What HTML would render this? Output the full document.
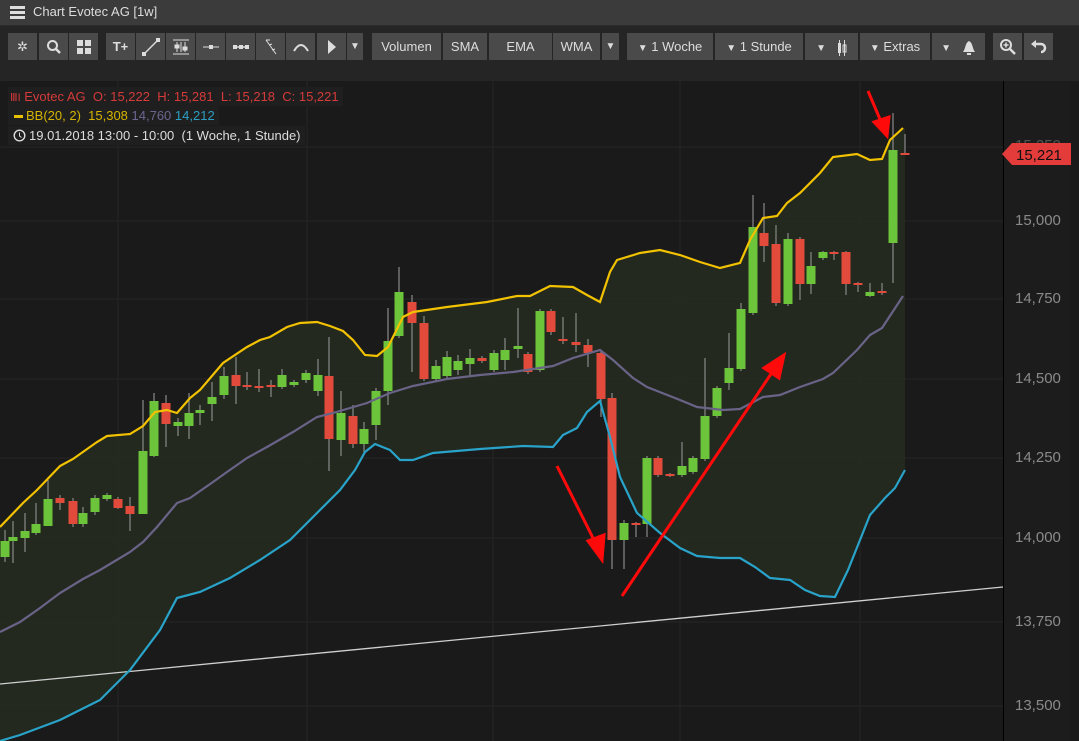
<!DOCTYPE html>
<html><head><meta charset="utf-8"><style>
*{margin:0;padding:0;box-sizing:border-box}
body{width:1079px;height:741px;background:#1a1a1a;font-family:"Liberation Sans",sans-serif;overflow:hidden;position:relative}
.title{position:absolute;left:0;top:0;width:1079px;height:26px;background:#3b3b3b;border-bottom:1px solid #2a2a2a;color:#ddd;font-size:13px;line-height:24px;padding-left:33px}
.hb{position:absolute;left:10px;top:6px;width:15px;height:3px;background:#ddd;box-shadow:0 5px 0 #ddd,0 10px 0 #ddd}
.tb{position:absolute;left:0;top:26px;width:1079px;height:55px;background:#252525}
.b{position:absolute;top:33px;height:27px;background:#4a4a4a;color:#ddd;font-size:13px;line-height:27px;text-align:center}
.leg{position:absolute;left:8px;font-size:13px;height:19px;line-height:19px;background:#1f1f1f;padding:0 4px 0 2px}
.ax{position:absolute;left:1003px;top:81px;width:67px;height:660px;background:#1c1c1c;border-left:1px solid #000}
.al{position:absolute;left:1015px;color:#8a8a8a;font-size:15px}
</style></head><body>
<div class="title"><div class="hb"></div>Chart Evotec AG [1w]</div>
<div class="tb"></div>
<div class="b" style="left:8px;width:29px">✲</div>
<div class="b" style="left:39px;width:29px"><svg width="16" height="16" viewBox="0 0 16 16" style="margin-top:6px"><circle cx="6.5" cy="6.5" r="4.5" stroke="#ddd" stroke-width="2" fill="none"/><path d="M10 10l4 4" stroke="#ddd" stroke-width="2.5"/></svg></div>
<div class="b" style="left:69px;width:29px"><svg width="14" height="14" style="margin-top:7px"><rect x="0" y="0" width="6" height="6" fill="#ddd"/><rect x="8" y="0" width="6" height="6" fill="#ddd"/><rect x="0" y="8" width="6" height="6" fill="#ddd"/><rect x="8" y="8" width="6" height="6" fill="#ddd"/></svg></div>
<div class="b" style="left:106px;width:29px;font-weight:bold">T+</div>
<div class="b" style="left:136px;width:29px"><svg width="20" height="20" style="margin-top:4px"><path d="M3 17L17 3" stroke="#ddd" stroke-width="1.5"/><rect x="1" y="15" width="4" height="4" fill="#ddd"/><rect x="15" y="1" width="4" height="4" fill="#ddd"/></svg></div>
<div class="b" style="left:166px;width:29px"><svg width="20" height="20" style="margin-top:4px" stroke="#ddd" fill="none"><path d="M2 3h16M2 17h16M6 5v10M10 5v10M14 5v10"/><rect x="4" y="8" width="4" height="3" fill="#ddd"/><rect x="12" y="10" width="4" height="3" fill="#ddd"/></svg></div>
<div class="b" style="left:196px;width:29px"><svg width="20" height="20" style="margin-top:4px"><path d="M2 10h16" stroke="#ddd"/><rect x="8" y="8" width="4" height="4" fill="#ddd"/></svg></div>
<div class="b" style="left:226px;width:29px"><svg width="20" height="20" style="margin-top:4px"><path d="M2 10h16" stroke="#ddd" stroke-width="1.5"/><rect x="2" y="8" width="4" height="4" fill="#ddd"/><rect x="8" y="8" width="4" height="4" fill="#ddd"/><rect x="14" y="8" width="4" height="4" fill="#ddd"/></svg></div>
<div class="b" style="left:256px;width:29px"><svg width="20" height="20" style="margin-top:4px" stroke="#ddd" fill="none"><path d="M5 3l10 14M5 3l4 0M8 8l3 -1M11 13l3 -1"/></svg></div>
<div class="b" style="left:286px;width:29px"><svg width="20" height="20" style="margin-top:4px"><path d="M3 14Q10 2 17 14" stroke="#ddd" stroke-width="2" fill="none"/></svg></div>
<div class="b" style="left:317px;width:29px"><svg width="20" height="20" style="margin-top:4px"><path d="M6 3l8 7-8 7z" fill="#ddd"/></svg></div>
<div class="b" style="left:347px;width:16px;font-size:10px">▼</div>
<div class="b" style="left:372px;width:69px">Volumen</div>
<div class="b" style="left:443px;width:44px">SMA</div>
<div class="b" style="left:489px;width:63px">EMA</div>
<div class="b" style="left:553px;width:47px">WMA</div>
<div class="b" style="left:602px;width:17px;font-size:10px">▼</div>
<div class="b" style="left:627px;width:86px"><span style="font-size:10px">▼</span> 1 Woche</div>
<div class="b" style="left:715px;width:88px"><span style="font-size:10px">▼</span> 1 Stunde</div>
<div class="b" style="left:805px;width:53px"><span style="font-size:10px">▼</span>&nbsp;&nbsp;&nbsp;<svg width="10" height="18" style="vertical-align:middle"><rect x="1" y="4" width="3" height="10" fill="#ddd"/><path d="M2.5 1v16M7.5 1v16" stroke="#ddd"/><rect x="6" y="6" width="3" height="7" fill="none" stroke="#ddd"/></svg></div>
<div class="b" style="left:860px;width:70px"><span style="font-size:10px">▼</span> Extras</div>
<div class="b" style="left:932px;width:53px"><span style="font-size:10px">▼</span>&nbsp;&nbsp;&nbsp;<svg width="14" height="16" style="vertical-align:middle"><path d="M7 1C3 3 4 8 1 12h12C10 8 11 3 7 1z" fill="#ddd"/><rect x="5" y="13" width="4" height="2" fill="#ddd"/></svg></div>
<div class="b" style="left:993px;width:29px"><svg width="18" height="18" style="margin-top:5px"><circle cx="7" cy="7" r="5" stroke="#ddd" stroke-width="2" fill="none"/><path d="M11 11l5 5" stroke="#ddd" stroke-width="2.5"/><path d="M4.5 7h5M7 4.5v5" stroke="#ddd" stroke-width="1.5"/></svg></div>
<div class="b" style="left:1024px;width:29px"><svg width="18" height="18" style="margin-top:5px"><path d="M5 6h6a4 4 0 0 1 0 8" stroke="#ddd" stroke-width="2.5" fill="none"/><path d="M1 6l5-4v8z" fill="#ddd"/></svg></div>

<div class="ax"></div>
<svg width="1003" height="660" style="position:absolute;left:0;top:81px" viewBox="0 81 1003 660">
<g stroke="#252525" stroke-width="1">
<path d="M118 81V741M307 81V741M493 81V741M680 81V741M860 81V741"/>
<path d="M0 147H1003M0 221H1003M0 299H1003M0 379H1003M0 458H1003M0 538H1003M0 622H1003M0 706H1003"/>
</g>
<path fill="#242a20" opacity="0.95" d="M0 527L23 503L37 490L60 466L73 459L97 442L107 436L130 434L143 426L155 412L167 410L177 413L190 398L200 390L223 363L247 347L260 340L270 337L287 327L300 323L317 322L330 326L343 331L353 340L365 355L377 356L388 347L403 317L413 312L447 307L487 302L517 296L530 296L550 286L573 287L587 295L600 302L610 272L617 260L640 253L660 250L680 255L700 262L720 268L740 263L750 240L763 218L777 216L787 203L800 193L820 173L833 157L857 154L870 160L882 159L890 140L903 128L905 128L905 470L895 488L885 498L870 515L860 540L848 570L835 597L820 596L805 590L790 580L770 578L755 567L740 558L720 558L697 556L680 548L660 533L637 513L620 477L610 437L600 401L587 412L577 428L563 435L553 447L523 446L480 449L433 453L413 460L400 460L390 450L375 444L365 452L355 470L340 490L320 510L290 540L260 560L230 578L200 592L177 598L160 630L130 670L100 700L60 720L20 735L0 741Z"/>
<path d="M0 684L1003 587" stroke="#d0d0d0" stroke-width="1.3"/>
<g id="c"></g>
<path fill="none" stroke="#6a6388" stroke-width="2.2" d="M0 632L20 622L40 608L60 593L83 579L100 570L130 552L143 542L157 527L177 503L190 498L213 482L227 472L247 458L267 447L293 432L317 417L333 413L367 403L390 393L413 386L447 379L480 375L513 372L553 366L573 358L600 350L613 360L633 378L647 387L680 400L697 407L723 410L740 409L763 397L780 395L800 387L823 379L833 373L857 350L870 335L882 328L903 296"/>
<path fill="none" stroke="#29a3c9" stroke-width="2.2" d="M0 741L20 735L60 720L100 700L130 670L160 630L177 598L200 592L230 578L260 560L290 540L320 510L340 490L355 470L365 452L375 444L390 450L400 460L413 460L433 453L480 449L523 446L553 447L563 435L577 428L587 412L600 401L610 437L620 477L637 513L660 533L680 548L697 556L720 558L740 558L755 567L770 578L790 580L805 590L820 596L835 597L848 570L860 540L870 515L885 498L895 488L905 470"/>
<path fill="none" stroke="#f2c200" stroke-width="2.2" d="M0 527L23 503L37 490L60 466L73 459L97 442L107 436L130 434L143 426L155 412L167 410L177 413L190 398L200 390L223 363L247 347L260 340L270 337L287 327L300 323L317 322L330 326L343 331L353 340L365 355L377 356L388 347L403 317L413 312L447 307L487 302L517 296L530 296L550 286L573 287L587 295L600 302L610 272L617 260L640 253L660 250L680 255L700 262L720 268L740 263L750 240L763 218L777 216L787 203L800 193L820 173L833 157L857 154L870 160L882 159L890 140L903 128"/>
<g stroke="#ff0a0a" stroke-width="3" fill="#ff0a0a">
<path d="M557 466L597 546"/><path d="M602 560L588 541L604 535Z"/>
<path d="M622 596L775 368"/><path d="M784 355L779 378L764 368Z"/>
<path d="M868 91L882 124"/><path d="M887 136L874 122L889 117Z"/>
</g>
</svg>
<div class="al" style="top:137px;color:#555">15,250</div>
<div class="al" style="top:212px">15,000</div>
<div class="al" style="top:290px">14,750</div>
<div class="al" style="top:370px">14,500</div>
<div class="al" style="top:449px">14,250</div>
<div class="al" style="top:529px">14,000</div>
<div class="al" style="top:613px">13,750</div>
<div class="al" style="top:697px">13,500</div>
<svg width="70" height="24" style="position:absolute;left:1002px;top:142px"><path d="M0 12L10 1H69V23H10Z" fill="#e43b3b"/><text x="14" y="18" font-family="Liberation Sans" font-size="15" fill="#111">15,221</text></svg>
<div class="leg" style="top:87px;color:#d63a3a"><span style="font-size:11px">ⅢΙ</span> Evotec AG&nbsp; O: 15,222&nbsp; H: 15,281&nbsp; L: 15,218&nbsp; C: 15,221</div>
<div class="leg" style="top:106px;color:#d6b400"><span style="display:inline-block;width:9px;height:3px;background:#e8c000;vertical-align:middle;margin:0 3px 0 4px"></span>BB(20, 2)&nbsp; 15,308 <span style="color:#6d6590">14,760</span> <span style="color:#2d9fc4">14,212</span></div>
<div class="leg" style="top:126px;color:#ddd"><svg width="13" height="13" style="vertical-align:-2px;margin:0 3px 0 3px"><circle cx="6.5" cy="6.5" r="5.3" stroke="#ddd" stroke-width="1.4" fill="none"/><path d="M6.5 3.5v3.5l2 1.5" stroke="#ddd" fill="none"/></svg>19.01.2018 13:00 - 10:00&nbsp; (1 Woche, 1 Stunde)</div>
<script>
var d=[[5,541,557,530,562],[13,537,541,521,563],[25,531,538,513,552],[36,524,533,503,535],[48,499,526,480,526],[60,498,503,495,510,1],[73,501,524,498,527,1],[83,513,524,507,527],[95,498,512,495,515],[107,495,499,493,501],[118,499,508,497,509,1],[130,506,514,497,531,1],[143,451,514,400,514],[154,401,456,393,457],[166,403,424,395,447,1],[178,422,426,418,436],[189,413,426,393,439],[200,410,413,405,425],[212,397,404,382,421],[224,376,395,367,399],[236,375,386,357,404,1],[247,385,387,372,390,1],[259,386,388,369,392,1],[271,385,387,380,397,1],[282,375,387,369,389],[294,382,385,380,387],[306,373,380,370,383],[318,375,391,359,396],[329,376,439,337,471,1],[341,413,440,391,456],[353,416,444,405,448,1],[364,429,444,422,452],[376,391,425,388,440],[388,341,391,308,405],[399,292,336,267,338],[412,302,323,295,372,1],[424,323,379,316,381,1],[436,366,379,360,381],[447,357,376,351,378],[458,361,370,355,375],[470,358,364,349,376],[482,358,361,356,363,1],[494,353,370,350,372],[505,350,360,338,370],[518,346,349,308,358],[528,354,372,352,374,1],[540,311,370,309,372],[551,311,332,309,335,1],[563,339,341,317,344,1],[576,342,345,313,352,1],[588,345,353,339,367,1],[601,353,399,350,417,1],[612,398,540,393,569,1],[624,523,540,520,569],[636,523,524,522,537,1],[647,458,524,456,537],[658,458,475,456,477,1],[670,474,475,473,477,1],[682,466,475,442,477],[693,458,472,456,474],[705,416,459,358,461],[717,388,416,386,418],[729,368,383,333,390],[741,309,369,303,371],[753,227,313,195,315],[764,233,246,203,262,1],[776,244,303,225,306,1],[788,239,304,233,306],[800,239,284,237,300,1],[811,266,284,252,294],[823,252,258,251,260],[834,252,253,251,260,1],[846,252,284,251,295,1],[858,283,284,282,292,1],[870,292,296,283,297],[882,291,292,283,295,1],[893,150,243,113,283],[905,153,154,134,155,1]];
var s='';d.forEach(function(c){var x=c[0],col=c[5]?'#e24b3b':'#6cc43a';s+='<line x1="'+x+'" x2="'+x+'" y1="'+c[3]+'" y2="'+c[4]+'" stroke="#8a8a8a" stroke-width="1.2"/>';var h=Math.max(2,c[2]-c[1]);s+='<rect x="'+(x-4.5)+'" y="'+c[1]+'" width="9" height="'+h+'" fill="'+col+'"/>';});
document.getElementById('c').innerHTML=s;
</script>
</body></html>
